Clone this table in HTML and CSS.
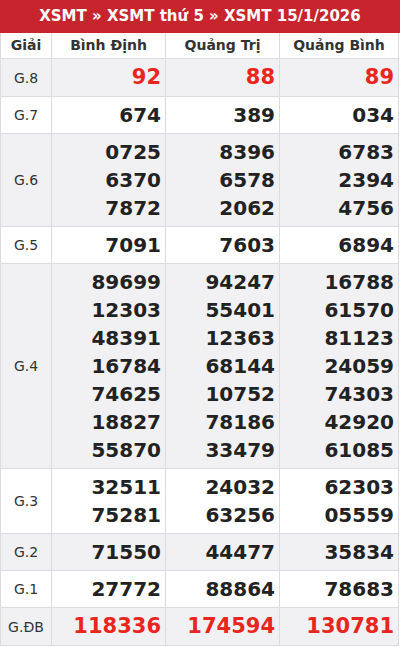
FILE: index.html
```html
<!DOCTYPE html>
<html lang="vi">
<head>
<meta charset="utf-8">
<title>XSMT 15/1/2026</title>
<link rel="stylesheet" href="styles.css">
</head>
<body>
<div class="wrap">
  <h1 class="title">XSMT » XSMT thứ 5 » XSMT 15/1/2026</h1>
  <table class="kq">
    <colgroup>
      <col class="c-label">
      <col class="c-prov">
      <col class="c-prov">
      <col class="c-last">
    </colgroup>
    <thead>
      <tr><th>Giải</th><th>Bình Định</th><th>Quảng Trị</th><th>Quảng Bình</th></tr>
    </thead>
    <tbody>
      <tr class="alt big">
        <td class="lbl">G.8</td>
        <td class="num red">92</td><td class="num red">88</td><td class="num red">89</td>
      </tr>
      <tr>
        <td class="lbl">G.7</td>
        <td class="num">674</td><td class="num">389</td><td class="num">034</td>
      </tr>
      <tr class="alt">
        <td class="lbl">G.6</td>
        <td class="num">0725<br>6370<br>7872</td>
        <td class="num">8396<br>6578<br>2062</td>
        <td class="num">6783<br>2394<br>4756</td>
      </tr>
      <tr>
        <td class="lbl">G.5</td>
        <td class="num">7091</td><td class="num">7603</td><td class="num">6894</td>
      </tr>
      <tr class="alt">
        <td class="lbl">G.4</td>
        <td class="num">89699<br>12303<br>48391<br>16784<br>74625<br>18827<br>55870</td>
        <td class="num">94247<br>55401<br>12363<br>68144<br>10752<br>78186<br>33479</td>
        <td class="num">16788<br>61570<br>81123<br>24059<br>74303<br>42920<br>61085</td>
      </tr>
      <tr>
        <td class="lbl">G.3</td>
        <td class="num">32511<br>75281</td>
        <td class="num">24032<br>63256</td>
        <td class="num">62303<br>05559</td>
      </tr>
      <tr class="alt">
        <td class="lbl">G.2</td>
        <td class="num">71550</td><td class="num">44477</td><td class="num">35834</td>
      </tr>
      <tr>
        <td class="lbl">G.1</td>
        <td class="num">27772</td><td class="num">88864</td><td class="num">78683</td>
      </tr>
      <tr class="alt big">
        <td class="lbl">G.ĐB</td>
        <td class="num red">118336</td><td class="num red">174594</td><td class="num red">130781</td>
      </tr>
    </tbody>
  </table>
</div>
</body>
</html>
```

FILE: styles.css
```css
html, body {
  margin: 0;
  padding: 0;
  background: #ffffff;
}
body {
  font-family: "DejaVu Sans", "Liberation Sans", sans-serif;
  color: #222222;
}
.wrap {
  width: 399px;
}
.title {
  margin: 0;
  height: 33px;
  line-height: 33px;
  background: #c8242d;
  color: #ffffff;
  font-size: 15px;
  font-weight: bold;
  text-align: center;
  width: 400px;
}
.kq {
  width: 399px;
  border-collapse: collapse;
  table-layout: fixed;
}
.c-label { width: 51px; }
.c-prov { width: 114px; }
.c-last { width: 119px; }
.kq th, .kq td {
  border: 1px solid #dcdce0;
  padding: 4px 4px;
}
.kq th {
  font-size: 14px;
  line-height: 17px;
  font-weight: bold;
  color: #333333;
  text-align: center;
  border-top: none;
  background: #ffffff;
}
.kq tr.alt td {
  background: #f1f1f3;
}
.lbl {
  font-size: 14px;
  line-height: 20px;
  text-align: center;
  color: #333333;
}
.num {
  font-size: 20px;
  line-height: 28px;
  font-weight: bold;
  text-align: right;
  color: #222222;
}
.big .num {
  line-height: 29px;
}
.num.red {
  color: #e8261d;
  font-size: 21px;
}
```
